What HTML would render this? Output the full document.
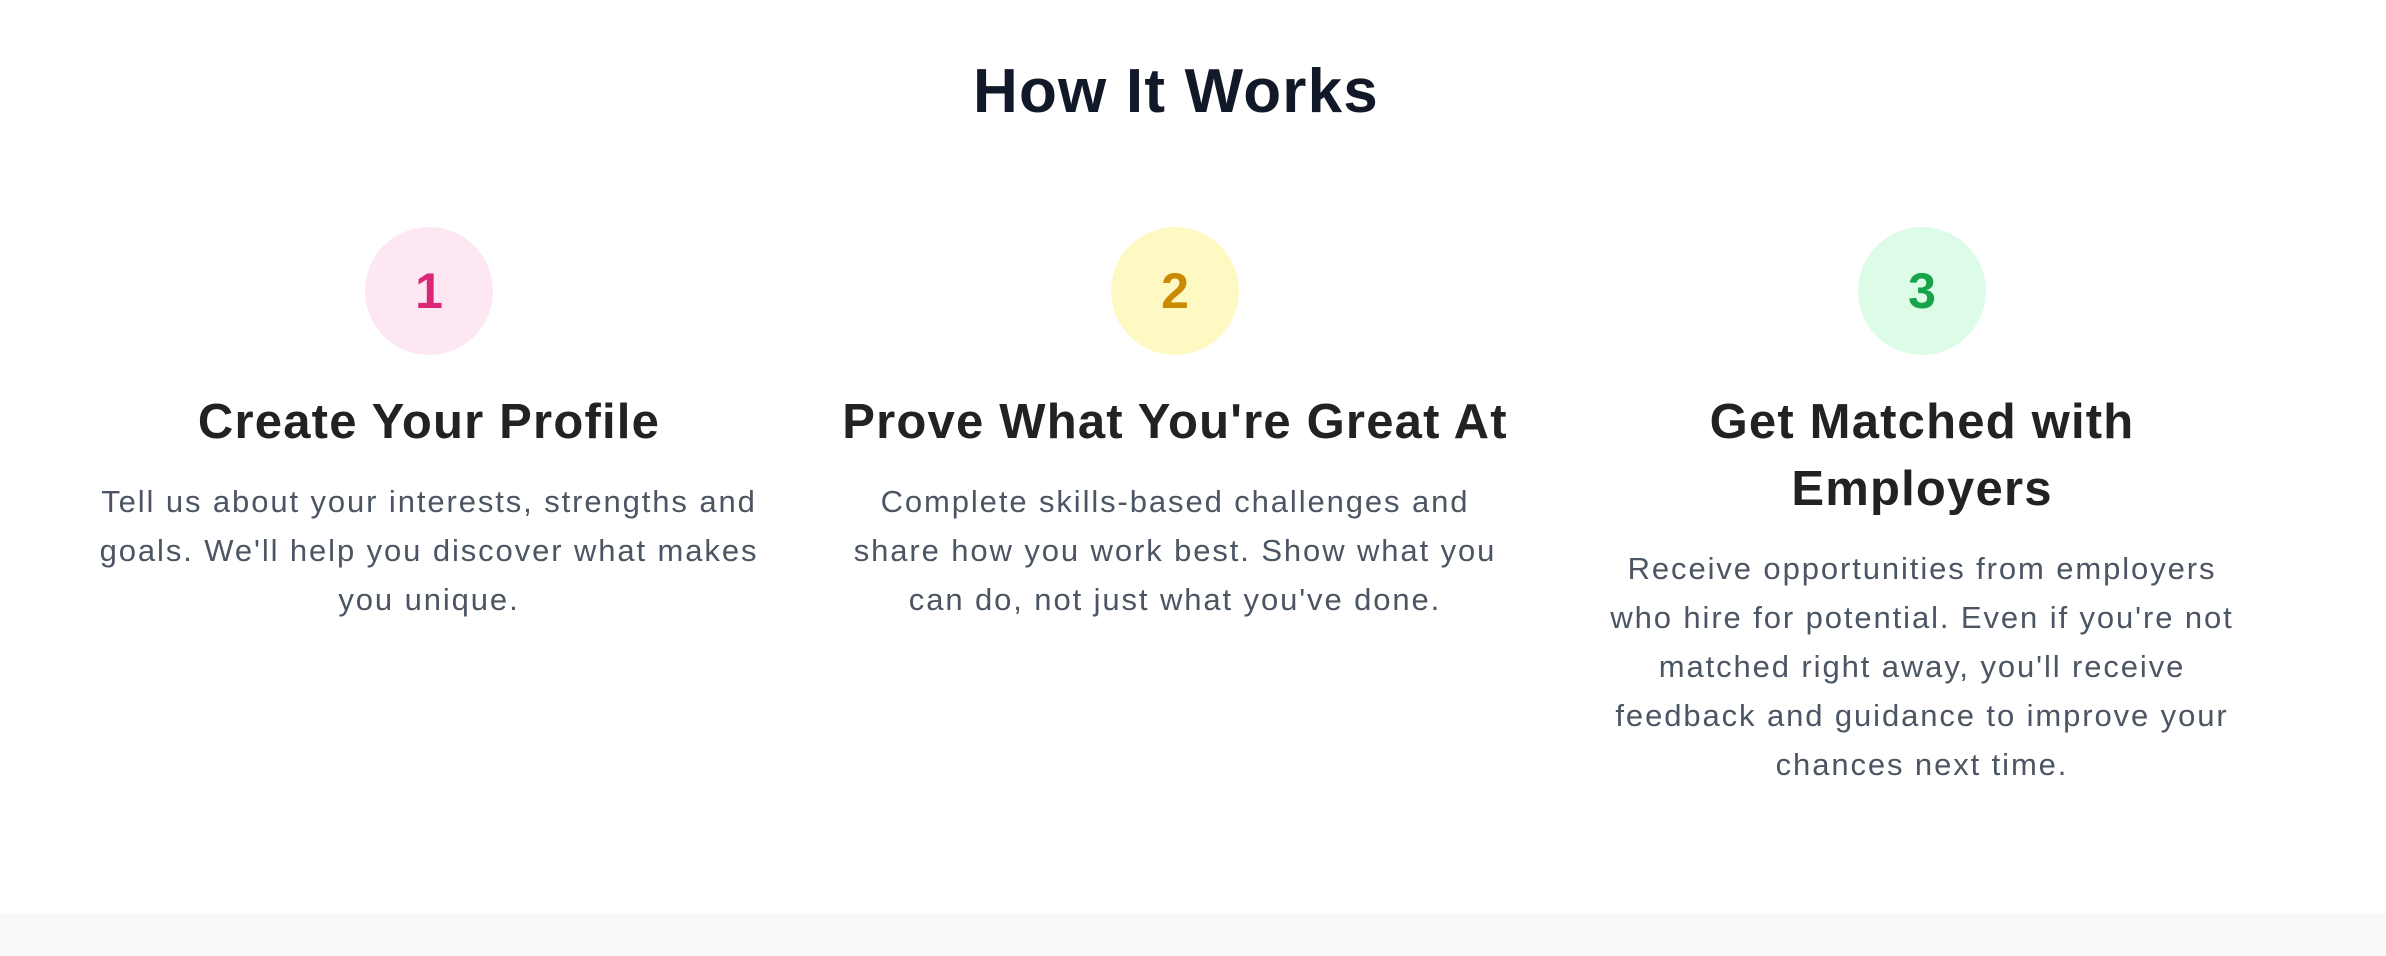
<!DOCTYPE html>
<html><head><meta charset="utf-8"><style>
html,body{margin:0;padding:0;width:2386px;height:956px;background:#fff;overflow:hidden;font-family:"Liberation Sans",sans-serif;}
.title{position:absolute;left:-17px;width:2386px;top:52px;text-align:center;font-size:62px;font-weight:bold;color:#111827;line-height:80px;letter-spacing:1.2px;}
.col{position:absolute;top:227px;width:720px;text-align:center;}
.circ{width:128px;height:128px;border-radius:50%;margin:0 auto;display:flex;align-items:center;justify-content:center;font-size:50px;font-weight:bold;}
h3{margin:34px 0 0;font-size:49px;line-height:67px;color:#222;font-weight:bold;white-space:nowrap;letter-spacing:1.2px;}
p{margin:21px 0 0;font-size:31px;line-height:49px;color:#4b5563;white-space:nowrap;letter-spacing:1.9px;}
.foot{position:absolute;left:0;top:913px;width:2386px;height:43px;background:#f8f9fa;}
</style></head><body>
<div class="title">How It Works</div>
<div class="col" style="left:69px">
<div class="circ" style="background:#fce7f3;color:#db2777">1</div>
<h3>Create Your Profile</h3>
<p>Tell us about your interests, strengths and<br>goals. We'll help you discover what makes<br>you unique.</p>
</div>
<div class="col" style="left:815px">
<div class="circ" style="background:#fef9c3;color:#ca8a04">2</div>
<h3>Prove What You're Great At</h3>
<p>Complete skills-based challenges and<br>share how you work best. Show what you<br>can do, not just what you've done.</p>
</div>
<div class="col" style="left:1562px">
<div class="circ" style="background:#dcfce7;color:#16a34a">3</div>
<h3>Get Matched with<br>Employers</h3>
<p>Receive opportunities from employers<br>who hire for potential. Even if you're not<br>matched right away, you'll receive<br>feedback and guidance to improve your<br>chances next time.</p>
</div>
<div class="foot"></div>
</body></html>
